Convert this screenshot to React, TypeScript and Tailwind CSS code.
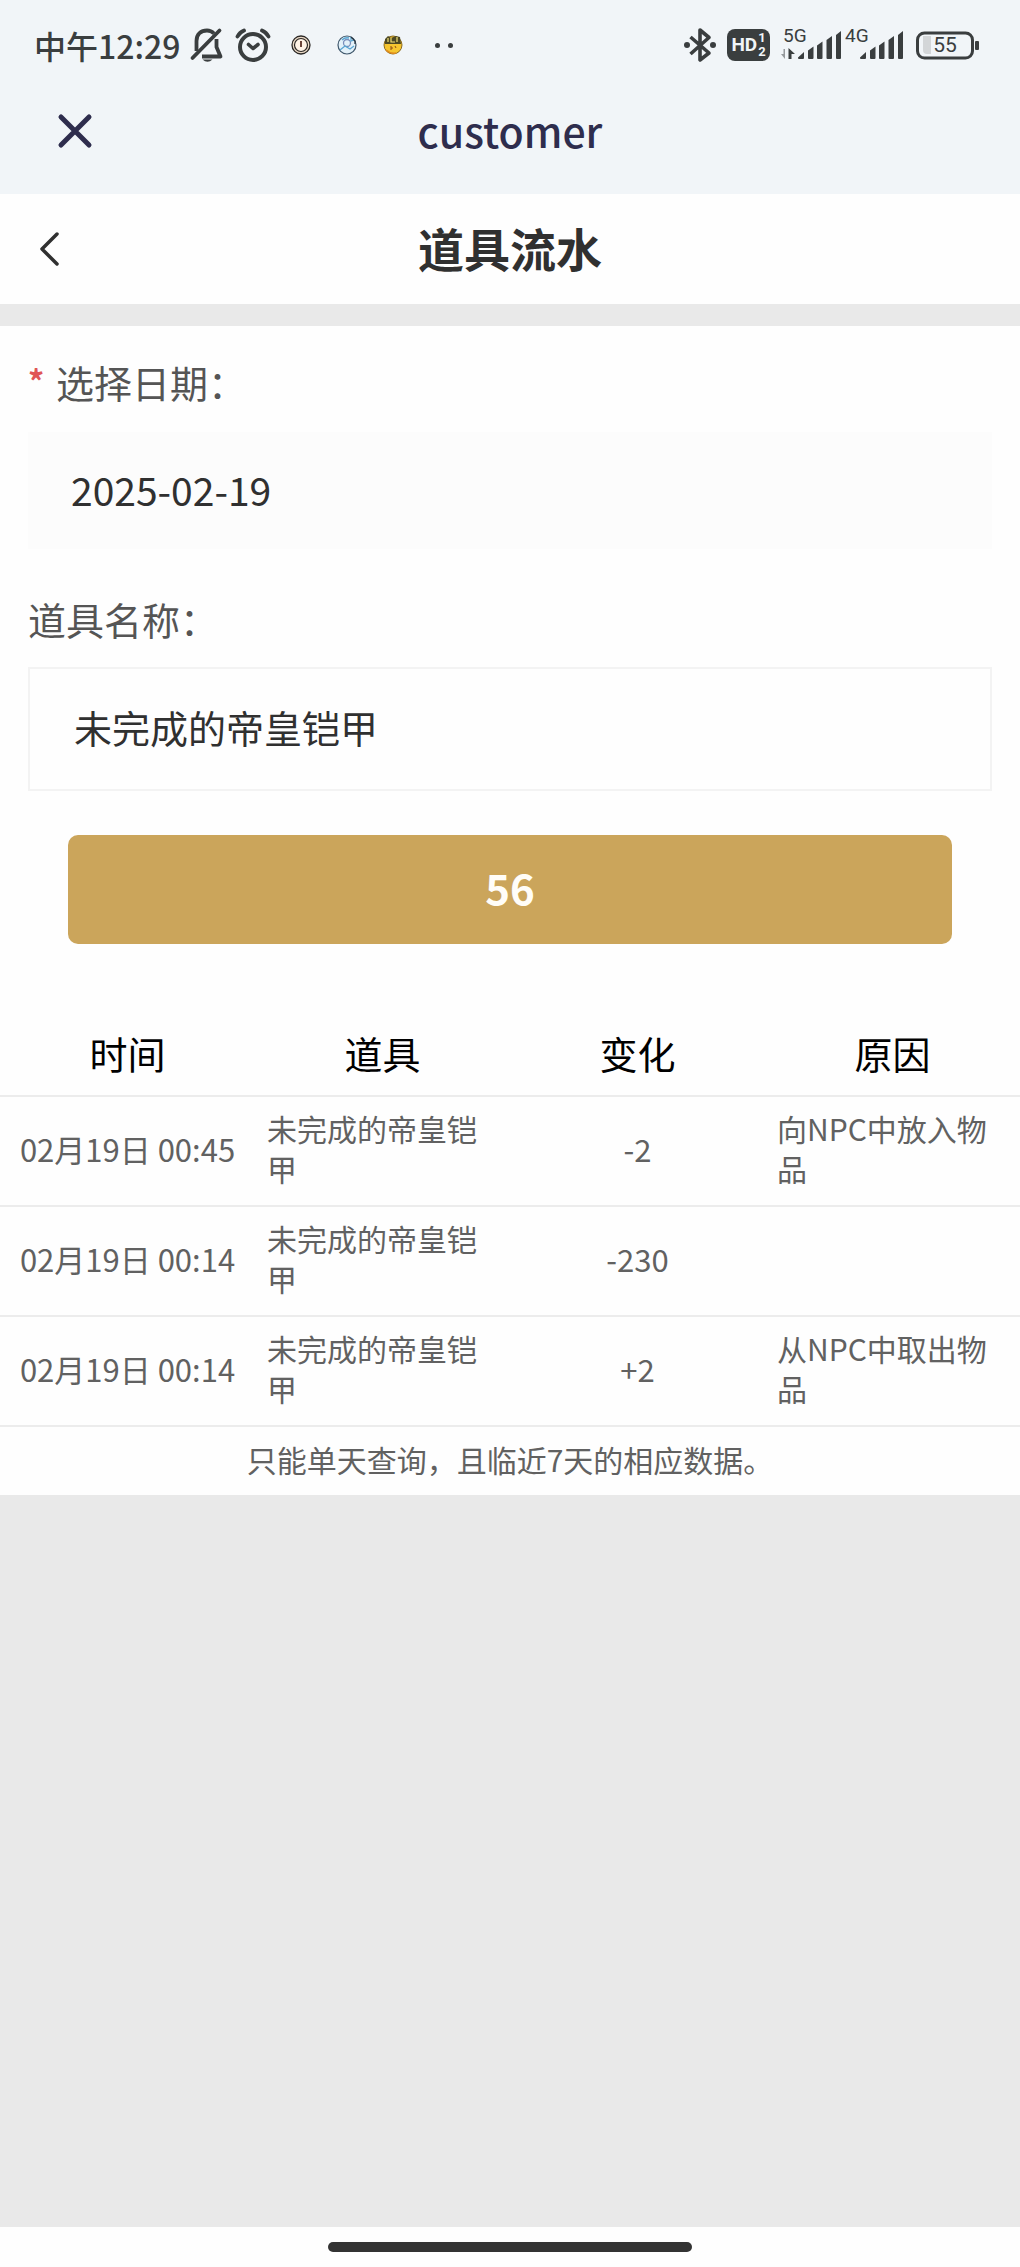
import React, { useState } from 'react';

type FlowRecord = {
  time: string;
  item: string;
  change: string;
  reason: string;
};

const records: FlowRecord[] = [
  { time: '02月19日 00:45', item: '未完成的帝皇铠甲', change: '-2', reason: '向NPC中放入物品' },
  { time: '02月19日 00:14', item: '未完成的帝皇铠甲', change: '-230', reason: '' },
  { time: '02月19日 00:14', item: '未完成的帝皇铠甲', change: '+2', reason: '从NPC中取出物品' },
];

const BellOffIcon: React.FC = () => (
  <svg width="36" height="36" viewBox="0 0 36 36" fill="none" stroke="currentColor" strokeWidth="3.800" aria-hidden="true">
    <path d="M7.500 24V14C7.500 7 12 3.500 18 3.500C21 3.500 23 4.500 25 6.500" />
    <path d="M3.500 31L30.500 3.500" strokeLinecap="round" />
    <path d="M27.500 12V20L31.500 29.500H13" strokeLinejoin="round" />
    <path d="M13.500 32.500H23.500Q18.500 37 13.500 32.500Z" fill="currentColor" stroke="none" />
  </svg>
);

const AlarmIcon: React.FC = () => (
  <svg width="36" height="36" viewBox="0 0 36 36" fill="none" stroke="currentColor" strokeLinecap="round" aria-hidden="true">
    <circle cx="18" cy="20" r="13" strokeWidth="4" />
    <path d="M2.500 9.500Q4.500 5.500 9 3.500M33.500 9.500Q31.500 5.500 27 3.500" strokeWidth="3.800" />
    <path d="M13.500 17.500L18 21.500L23 17.500" strokeWidth="3.600" strokeLinejoin="round" />
  </svg>
);

const ClockBadge: React.FC = () => (
  <svg width="20" height="20" viewBox="0 0 20 20" fill="none" aria-hidden="true">
    <circle cx="10" cy="10" r="9" fill="#ead9c6" stroke="#2b2825" strokeWidth="1.300" />
    <circle cx="10" cy="10" r="6.500" fill="#fff3e6" stroke="#2b2825" strokeWidth="1.200" />
    <path d="M10 6V12" stroke="#5c3025" strokeWidth="1.800" />
  </svg>
);

const GlobeBadge: React.FC = () => (
  <svg width="20" height="20" viewBox="0 0 20 20" fill="none" aria-hidden="true">
    <circle cx="10" cy="10" r="9" fill="#e3f1f9" stroke="#40586c" strokeWidth="1.200" />
    <circle cx="10" cy="8" r="3.500" stroke="#7b8fbb" strokeWidth="1.300" />
    <path d="M3 15L8 11L13 14L17 11M5 5Q8 2 12 3M14 2V6L17 5" stroke="#5aa6d2" strokeWidth="1.300" />
    <path d="M14 2L18 6V9" stroke="#26343f" strokeWidth="1.300" />
  </svg>
);

const FaceBadge: React.FC = () => (
  <svg width="20" height="20" viewBox="0 0 20 20" fill="none" aria-hidden="true">
    <circle cx="10" cy="10" r="9" fill="#f5c52f" stroke="#8a6a1d" strokeWidth="1" />
    <path d="M2 9V4L5 1L8 3L13 1L17 2L18 9Z" fill="#4e4a25" />
    <path d="M5 3V7M8 3V7H12M14 2V7" stroke="#f2df74" strokeWidth="1.200" />
    <path d="M8 11V15M8 13H10M12 11L13 13" stroke="#8a4b16" strokeWidth="1" />
    <path d="M3 15Q7 19 13 18" stroke="#e08b1e" strokeWidth="1.500" />
  </svg>
);

const BluetoothIcon: React.FC = () => (
  <svg width="34" height="36" viewBox="0 0 34 36" fill="none" stroke="currentColor" strokeWidth="3.600" strokeLinejoin="round" aria-hidden="true">
    <path d="M7.500 10L26 26L17 33V3L26 10.500L7.500 27" />
    <circle cx="4" cy="18" r="3" fill="currentColor" stroke="none" />
    <circle cx="30" cy="18" r="3" fill="currentColor" stroke="none" />
  </svg>
);

const HdBadge: React.FC = () => (
  <span className="flex h-8 w-[43px] items-center justify-center gap-px rounded-lg bg-[#3a3e3f] font-['Roboto',sans-serif] font-bold text-[#f1f5f8]">
    <span className="text-[19px] leading-8">HD</span>
    <span className="flex flex-col text-[13px] leading-[14px]">
      <span>1</span>
      <span>2</span>
    </span>
  </span>
);

const Signal: React.FC<{ label: string; data?: boolean }> = ({ label, data }) => (
  <svg width="62" height="48" viewBox="0 -6 62 48" fill="currentColor" role="img" aria-label={label}>
    <text x="3" y="15" fontSize="19" fontFamily="Roboto, sans-serif">{label}</text>
    {data && (
      <>
        <path d="M5 22V32L1 27H3.500V22Z" opacity="0.500" />
        <path d="M8.500 32V21L15 27H11.500V32Z" />
      </>
    )}
    <path d="M18 30.500L24 25V31Q24 32 23 32H19Q18 32 18 31Z" />
    <path d="M28 23.500L33.500 19.500V31Q33.500 32 32.500 32H29Q28 32 28 31Z" />
    <path d="M37 18.500L42.500 14.500V31Q42.500 32 41.500 32H38Q37 32 37 31Z" />
    <path d="M46.500 13L52 9V31Q52 32 51 32H47.500Q46.500 32 46.500 31Z" />
    <path d="M56 8L61 4V31Q61 32 60 32H57Q56 32 56 31Z" />
  </svg>
);

const Battery: React.FC<{ level: number }> = ({ level }) => (
  <svg width="64" height="30" viewBox="0 0 64 30" fill="none" role="img" aria-label={`${level}%`}>
    <path d="M7 6H15V24H11Q7 24 7 20Z" fill="#d3d6d8" />
    <rect x="1.500" y="3" width="55" height="25" rx="7" stroke="currentColor" strokeWidth="3" />
    <rect x="59" y="11" width="4" height="9" rx="1" fill="currentColor" />
    <text x="29" y="22" fontSize="21" textAnchor="middle" fill="currentColor" fontFamily="Roboto, sans-serif">{level}</text>
  </svg>
);

const StatusBar: React.FC = () => (
  <div className="flex h-[90px] items-center justify-between pl-[34px] pr-10 text-[#3a3e3f]">
    <div className="flex items-center">
      <span className="whitespace-nowrap text-[32px] font-medium leading-10">中午12:29</span>
      <div className="ml-2 flex items-center gap-2.5">
        <BellOffIcon />
        <AlarmIcon />
      </div>
      <div className="ml-5 flex items-center gap-[26px]">
        <ClockBadge />
        <GlobeBadge />
        <FaceBadge />
      </div>
      <div className="ml-8 flex items-center gap-2">
        <span className="size-[5px] rounded-full bg-[#3a3e3f]" />
        <span className="size-[5px] rounded-full bg-[#3a3e3f]" />
      </div>
    </div>
    <div className="flex items-center">
      <BluetoothIcon />
      <div className="ml-2.5 mr-2.5">
        <HdBadge />
      </div>
      <Signal label="5G" data />
      <Signal label="4G" />
      <div className="ml-3">
        <Battery level={55} />
      </div>
    </div>
  </div>
);

const TopBar: React.FC = () => (
  <header className="bg-[#f1f5f8]">
    <StatusBar />
    <div className="grid grid-cols-[1fr_auto_1fr] items-center pb-[22px]">
      <button type="button" aria-label="关闭" className="ml-[55px] flex h-[82px] w-10 items-center justify-center text-[#2e2d4d]">
        <svg width="40" height="40" viewBox="0 0 40 40" fill="none" stroke="currentColor" strokeWidth="5" strokeLinecap="round" aria-hidden="true">
          <path d="M6 6L34 34M34 6L6 34" />
        </svg>
      </button>
      <span className="pb-0.5 text-[41px] font-medium leading-[60px] text-[#2e2d4d]">customer</span>
    </div>
  </header>
);

const App: React.FC = () => {
  const [date, setDate] = useState('2025-02-19');
  const [itemName, setItemName] = useState('未完成的帝皇铠甲');

  return (
    <div className="flex min-h-screen flex-col bg-[#e9e9e9] font-['Noto_Sans_CJK_SC',sans-serif]">
      <TopBar />

      <div className="grid h-[110px] grid-cols-[1fr_auto_1fr] items-center bg-[#fefefe] text-[#303030]">
        <button type="button" aria-label="返回" className="ml-[30px] flex size-10 items-center justify-center">
          <svg width="40" height="40" viewBox="0 0 40 40" fill="none" stroke="currentColor" strokeWidth="3.500" strokeLinecap="round" strokeLinejoin="round" aria-hidden="true">
            <path d="M27 5L12 20L27 35" />
          </svg>
        </button>
        <h1 className="pb-1 text-[46px] font-bold leading-[60px]">道具流水</h1>
      </div>

      <main className="mt-[22px] bg-[#fefefe]">
        <form className="px-7 pt-[26px]" onSubmit={e => e.preventDefault()}>
          <label htmlFor="date" className="flex gap-3 text-[38px] leading-[60px] text-[#555555]">
            <span className="w-4 text-[32px] font-bold leading-[56px] text-[#e05555]">*</span>
            选择日期：
          </label>
          <input
            id="date"
            value={date}
            onChange={e => setDate(e.target.value)}
            className="mt-5 h-[117px] w-full bg-[#fcfcfc] px-[43px] pb-1 text-[39px] text-[#303030] outline-none"
          />
          <label htmlFor="item" className="mt-10 block text-[38px] leading-[60px] text-[#555555]">
            道具名称：
          </label>
          <input
            id="item"
            value={itemName}
            onChange={e => setItemName(e.target.value)}
            className="mt-[18px] h-[124px] w-full border-2 border-[#f3f3f3] px-[44px] pb-1.5 text-[38px] text-[#303030] outline-none"
          />
          <div className="px-10 pt-11">
            <button type="submit" className="block h-[109px] w-full rounded-[10px] bg-[#cba55b] pb-1.5 text-[42px] font-bold text-[#fffdf8]">
              56
            </button>
          </div>
        </form>

        <table className="mt-[72px] w-full table-fixed border-collapse">
          <thead>
            <tr className="h-20 text-[38px] leading-[60px] text-black">
              <th className="p-0 pb-1.5 font-normal">时间</th>
              <th className="p-0 pb-1.5 font-normal">道具</th>
              <th className="p-0 pb-1.5 font-normal">变化</th>
              <th className="p-0 pb-1.5 font-normal">原因</th>
            </tr>
          </thead>
          <tbody className="text-[#616161]">
            {records.map((r, i) => (
              <tr key={i} className="h-[110px] border-y-2 border-[#ececec]">
                <td className="whitespace-nowrap pb-1 text-center text-[31px] leading-10">{r.time}</td>
                <td className="break-all px-3 pb-1.5 text-[30px] leading-10">{r.item}</td>
                <td className="pb-1 text-center text-[31px] leading-10">{r.change}</td>
                <td className="break-all px-3 pb-1.5 text-[30px] leading-10">{r.reason}</td>
              </tr>
            ))}
          </tbody>
        </table>
        <p className="pb-4 pt-3 text-center text-[30px] leading-10 text-[#616161]">
          只能单天查询，且临近7天的相应数据。
        </p>
      </main>

      <div className="mt-auto flex h-10 items-center justify-center bg-[#fefefe]">
        <span className="h-2.5 w-[364px] rounded-full bg-[#333333]" />
      </div>
    </div>
  );
};

export default App;
